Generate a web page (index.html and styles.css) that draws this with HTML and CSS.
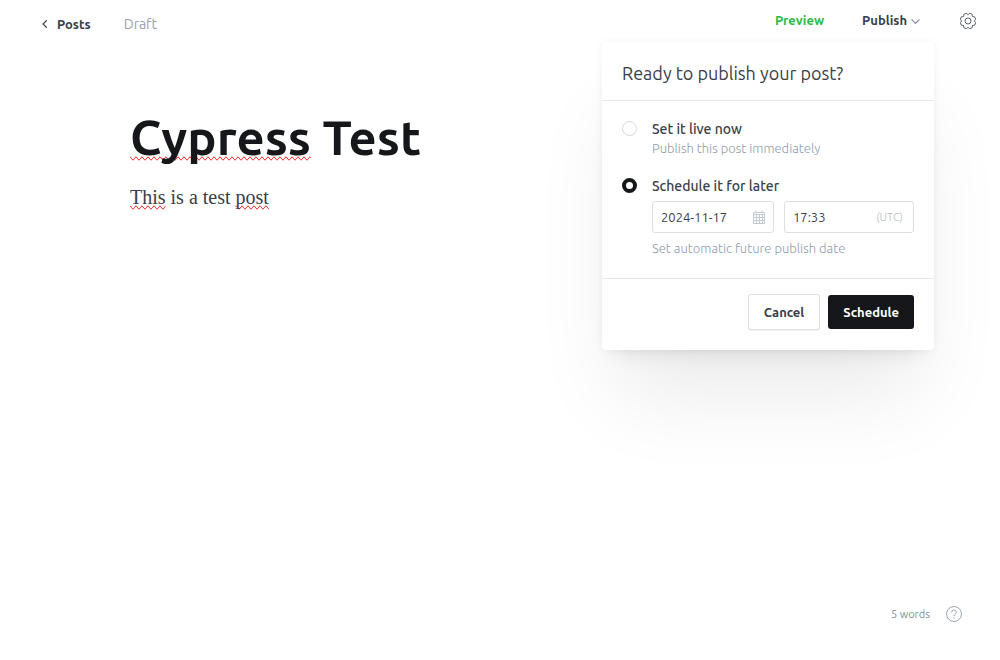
FILE: index.html
```html
<!DOCTYPE html>
<html lang="en">
<head>
<meta charset="utf-8">
<meta name="viewport" content="width=device-width, initial-scale=1">
<title>Cypress Test</title>
<link rel="stylesheet" href="styles.css">
</head>
<body>
<div class="editor">
  <header class="topbar">
    <nav class="topbar-start">
      <a class="back" href="#">
        <svg class="icon-back" viewBox="0 0 6 8" aria-hidden="true"><path d="M4.800.300 1 4l3.800 3.700"/></svg>
        Posts
      </a>
      <span class="status">Draft</span>
    </nav>
    <div class="topbar-end">
      <button class="text-button preview" type="button">Preview</button>
      <div class="publish">
        <button class="text-button publish-toggle" type="button" aria-expanded="true">
          <span>Publish</span>
          <svg class="icon-chevron" viewBox="0 0 8 6" aria-hidden="true"><path d="M.5 1.200 4 4.700l3.500-3.500"/></svg>
        </button>
        <form class="popover">
          <h2 class="popover-title">Ready to publish your post?</h2>
          <div class="options">
            <div class="option">
              <input class="radio" type="radio" name="when" id="now">
              <div class="option-body">
                <label class="option-label" for="now">Set it live now</label>
                <p class="hint">Publish this post immediately</p>
              </div>
            </div>
            <div class="option">
              <input class="radio" type="radio" name="when" id="later" checked>
              <div class="option-body">
                <label class="option-label" for="later">Schedule it for later</label>
                <div class="fields">
                  <div class="field">
                    <input class="field-input" type="text" aria-label="Publish date" value="2024-11-17">
                    <svg class="icon-calendar" viewBox="0 0 12 14" aria-hidden="true"><path d="M.5 2.500h11v11H.5zM.5 4.500h11M.5 7.500h11M.5 10.500h11M3.500 4.500v9M6.500 4.500v9M9.500 4.500v9M3 .5v3M9 .5v3"/></svg>
                  </div>
                  <div class="field">
                    <input class="field-input" type="text" aria-label="Publish time" value="17:33">
                    <span class="zone">(UTC)</span>
                  </div>
                </div>
                <p class="hint">Set automatic future publish date</p>
              </div>
            </div>
          </div>
          <div class="actions">
            <button class="button button-plain" type="button">Cancel</button>
            <button class="button button-dark" type="button">Schedule</button>
          </div>
        </form>
      </div>
      <button class="text-button settings" type="button" aria-label="Settings">
        <svg class="icon-gear" viewBox="0 0 24 24" aria-hidden="true"><circle cx="12" cy="12" r="4.500"/><path d="M23.500 14.750 22.060 18.170Q17.300 17.300 18.170 22.060L14.750 23.500Q12 19.500 9.250 23.500L5.830 22.060Q6.700 17.300 1.940 18.170L.5 14.750Q4.500 12 .5 9.250L1.940 5.830Q6.700 6.700 5.830 1.940L9.250.5Q12 4.500 14.750.5L18.170 1.940Q17.300 6.700 22.060 5.830L23.500 9.250Q19.500 12 23.500 14.750z"/></svg>
      </button>
    </div>
  </header>
  <main class="document">
    <h1 class="title"><span class="misspelt">Cypress</span> Test</h1>
    <p class="text"><span class="misspelt">This</span> is a test <span class="misspelt">post</span></p>
  </main>
  <footer class="footer">
    <span>5 words</span>
    <a class="help" href="#" aria-label="Help">
      <svg class="icon-help" viewBox="0 0 24 24" aria-hidden="true"><circle cx="12" cy="12" r="11.200"/><path d="M8.500 9.500A3.500 3.500 0 1 1 13.500 12.600c-1 .500-1.500 1.100-1.500 2.400"/><circle class="dot" cx="12" cy="18" r="1"/></svg>
    </a>
  </footer>
</div>
</body>
</html>
```
FILE: styles.css
```css
* {
  box-sizing: border-box;
}

body {
  margin: 0;
  background: #fff;
  color: #394047;
  font-family: Ubuntu, "Noto Sans", "Open Sans", sans-serif;
  font-size: 13px;
  line-height: 20px;
}

h1,
h2,
p {
  margin: 0;
}

button,
input {
  font: inherit;
  color: inherit;
}

svg {
  display: block;
  fill: none;
  stroke: currentColor;
}

.editor {
  display: flex;
  flex-direction: column;
  min-height: 100vh;
}

.topbar {
  display: flex;
  justify-content: space-between;
  padding: 10px 24px 0 42px;
}

.topbar-start,
.back,
.topbar-end,
.publish-toggle {
  display: flex;
  align-items: center;
}

.topbar-start {
  gap: 33px;
  padding-top: 4px;
}

.back {
  gap: 9px;
  color: #394047;
  font-weight: 600;
  text-decoration: none;
}

.icon-back {
  width: 6px;
  height: 8px;
  stroke-width: 1.2;
}

.status {
  color: #95a1ad;
  font-size: 14px;
}

.topbar-end {
  align-items: flex-start;
}

.text-button {
  padding: 0;
  border: 0;
  background: none;
  font-weight: 600;
  cursor: pointer;
}

.preview {
  margin-right: 38px;
  color: #30b943;
}

.publish {
  position: relative;
  margin-right: 40px;
}

.publish-toggle {
  gap: 4px;
}

.icon-chevron {
  width: 9px;
  height: 7px;
  margin-top: 2px;
  color: #7c8b9a;
}

.icon-gear {
  width: 16px;
  height: 22px;
  stroke-width: 1.2;
}

.popover {
  position: absolute;
  top: 32px;
  right: -14px;
  width: 332px;
  border-radius: 4px;
  background: #fff;
  box-shadow: 0 0 7px rgba(0, 0, 0, 0.05), 0 14px 20px -12px rgba(0, 0, 0, 0.1), 0 60px 80px -14px rgba(0, 0, 0, 0.08);
}

.popover-title {
  padding: 19px 20px 15px;
  border-bottom: 1px solid #e6e9eb;
  font-size: 18px;
  font-weight: 400;
  line-height: 24px;
}

.options {
  display: grid;
  gap: 18px;
  padding: 18px 20px 20px;
  border-bottom: 1px solid #e6e9eb;
}

.option {
  display: grid;
  grid-template-columns: 15px 1fr;
  gap: 15px;
}

.radio {
  width: 15px;
  height: 15px;
  margin: 2px 0 0;
  border: 1px solid #d3d9de;
  border-radius: 50%;
  background: #fff;
  appearance: none;
}

.radio:checked {
  border: 4px solid #15171a;
}

.option-label {
  display: block;
  font-size: 14px;
  font-weight: 500;
}

.hint {
  color: #8e9cac;
  font-weight: 300;
  line-height: 19px;
}

.fields {
  display: grid;
  grid-template-columns: 122px 1fr;
  gap: 10px;
  margin: 5px 0 6px;
}

.field {
  display: flex;
  align-items: center;
  height: 32px;
  padding: 0 8px;
  border: 1px solid #dddfe2;
  border-radius: 3px;
}

.field-input {
  flex: 1;
  width: 0;
  padding: 0;
  border: 0;
  outline: 0;
  background: none;
}

.icon-calendar {
  width: 12px;
  height: 14px;
  color: #c3cad1;
}

.zone {
  padding-right: 2px;
  color: #b4bdc6;
  font-size: 11px;
  font-weight: 300;
}

.actions {
  display: flex;
  justify-content: flex-end;
  align-items: center;
  gap: 8px;
  padding: 15px 20px 20px;
}

.button {
  height: 34px;
  padding: 0 15px;
  border: 0;
  border-radius: 3px;
  font-weight: 600;
  cursor: pointer;
}

.button-plain {
  height: 36px;
  border: 1px solid #dde1e5;
  background: #fff;
  box-shadow: 0 1px 1px rgba(0, 0, 0, 0.06);
}

.button-dark {
  background: #15171a;
  color: #fff;
}

.document {
  flex: 1;
  width: 100%;
  max-width: 740px;
  margin: 0 auto;
  padding-top: 73px;
}

.title {
  color: #15171a;
  font-size: 49px;
  font-weight: 700;
  line-height: 60px;
}

.text {
  margin-top: 14px;
  font-family: "Liberation Serif", serif;
  font-size: 20px;
  line-height: 32px;
}

.misspelt {
  text-decoration-line: spelling-error;
}

.footer {
  display: flex;
  justify-content: flex-end;
  align-items: center;
  gap: 16px;
  padding: 0 38px 36px;
  color: #7c8b9a;
  font-size: 11px;
}

.help {
  color: #95a1ad;
}

.icon-help {
  width: 16px;
  height: 16px;
  overflow: visible;
  stroke-width: 1.4;
}

.dot {
  fill: currentColor;
  stroke: none;
}
```
